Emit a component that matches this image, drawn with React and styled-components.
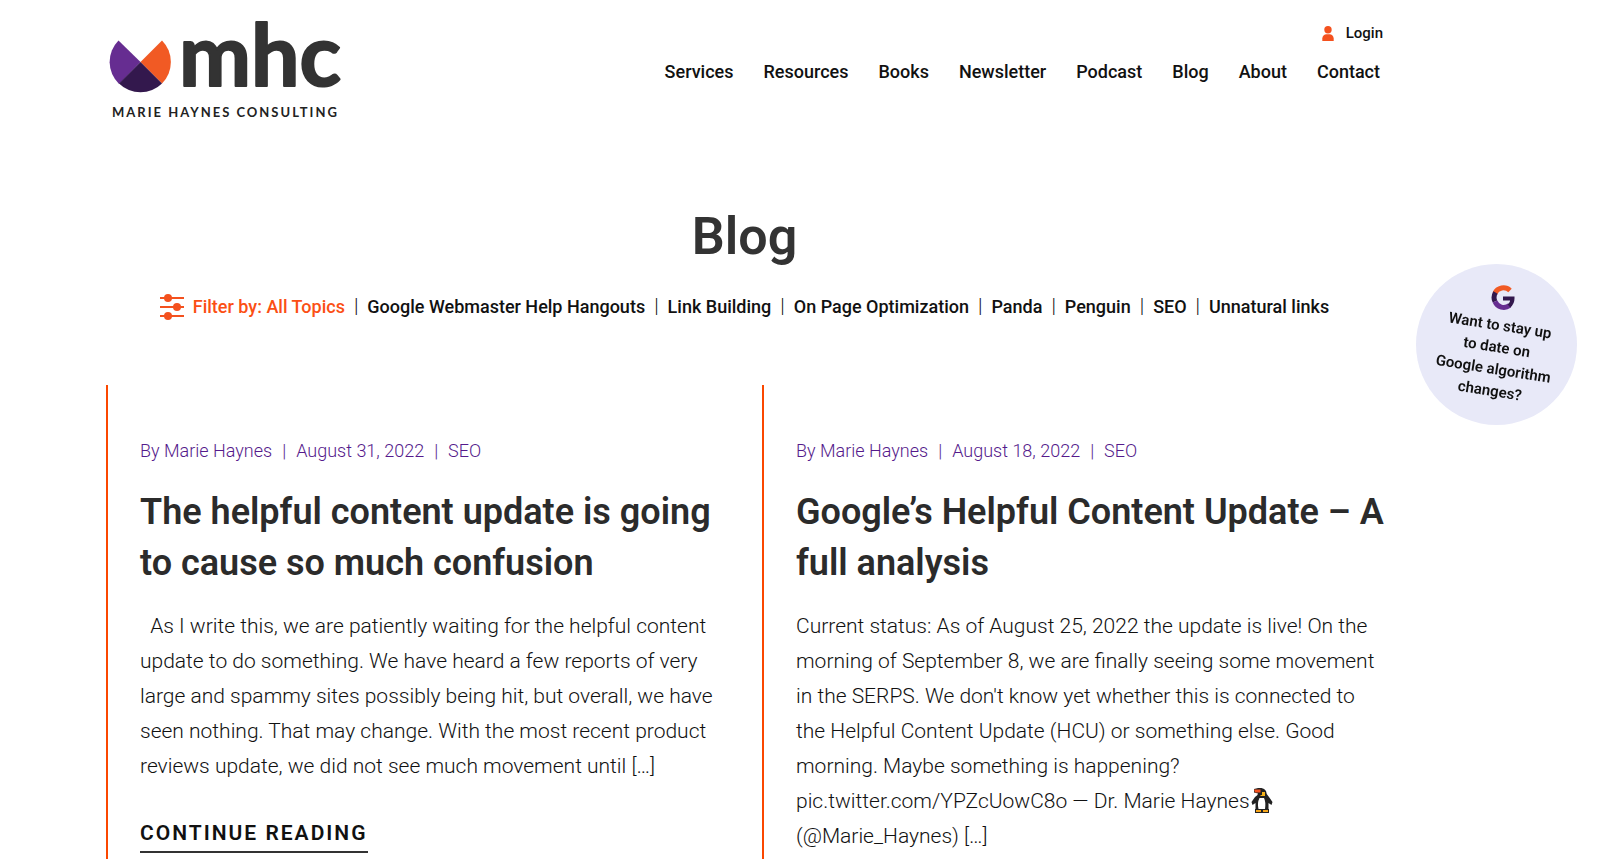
import React from 'react';
import styled, { createGlobalStyle } from 'styled-components';

const GlobalStyle = createGlobalStyle`
    * {
        box-sizing: border-box;
    }
    html {
        scrollbar-width: none;
    }
    body {
        margin: 0;
        background-color: #fff;
        color: #111;
        font-family: Roboto, "Liberation Sans", sans-serif;
    }
    a {
        color: inherit;
        text-decoration: none;
    }
    ul {
        list-style: none;
        margin: 0;
        padding: 0;
    }
`;
const Page = styled.div`
    padding: 0 217px 0 106px;
`;
const Header = styled.header`
    display: flex;
    justify-content: space-between;
    align-items: flex-start;
    padding-top: 12px;
`;
const LogoLink = styled.a`
    display: block;
    line-height: 0;
`;
const LogoSvg = styled.svg`
    width: 240px;
    height: 112px;
    overflow: visible;
`;
const HeaderRight = styled.div`
    display: flex;
    flex-direction: column;
    align-items: flex-end;
    gap: 17px;
    padding-top: 10px;
`;
const Login = styled.a`
    display: flex;
    align-items: center;
    gap: 12px;
    font-size: 15px;
    font-weight: 500;
    line-height: 22px;
`;
const Menu = styled.ul`
    display: flex;
    gap: 30px;
    padding-right: 3px;
    font-size: 18px;
    font-weight: 500;
    line-height: 22px;
`;
const Heading = styled.h1`
    margin: 83px 0 0;
    color: #333;
    font-size: 52px;
    font-weight: 600;
    line-height: 60px;
    text-align: center;
`;
const FilterBar = styled.nav`
    display: flex;
    justify-content: center;
    align-items: center;
    gap: 9px;
    margin-top: 27px;
    font-size: 18px;
    font-weight: 500;
    line-height: 26px;
    white-space: nowrap;
`;
const FilterList = styled.ul`
    display: flex;
`;
const FilterItem = styled.li`
    color: ${props => props.$active ? '#fb4f14' : '#111'};
    &:not(:first-child)::before {
        content: '|';
        margin: 0 9px;
        color: #111;
        font-size: 20px;
        font-weight: 300;
        line-height: 20px;
    }
`;
const Posts = styled.main`
    display: grid;
    grid-template-columns: 1fr 1fr;
    gap: 35px;
    margin-top: 65px;
`;
const Post = styled.article`
    padding: 54px 0 54px 32px;
    border-left: 2px solid #fb4700;
`;
const Meta = styled.div`
    display: flex;
    color: #551a8b;
    font-size: 18px;
    font-weight: 300;
    line-height: 24px;
    & > * + *::before {
        content: '|';
        margin: 0 10px;
    }
`;
const PostTitle = styled.h2`
    margin: 24px -4px 0 0;
    color: #2b2b2b;
    font-size: 36px;
    font-weight: 600;
    line-height: 51px;
`;
const Excerpt = styled.p`
    margin: 20px 0 0;
    font-size: 21px;
    font-weight: 300;
    line-height: 35px;
`;
const PenguinIcon = styled.svg`
    width: 22px;
    height: 25px;
    margin-left: 1px;
    vertical-align: -5px;
`;
const ReadMore = styled.a`
    display: inline-block;
    margin-top: 31px;
    border-bottom: 2px solid #333;
    font-size: 21px;
    font-weight: 600;
    line-height: 36px;
    letter-spacing: 2px;
    text-transform: uppercase;
`;
const Badge = styled.a`
    position: fixed;
    top: 264px;
    right: 23px;
    width: 161px;
    height: 161px;
    padding: 21px 3px 0 0;
    border-radius: 50%;
    background-color: #e8e9f8;
    display: flex;
    flex-direction: column;
    align-items: center;
    gap: 3px;
`;
const BadgeIcon = styled.svg`
    width: 26px;
    height: 26px;
    margin-left: 15px;
`;
const BadgeText = styled.span`
    width: 118px;
    font-size: 15px;
    font-weight: 600;
    line-height: 22px;
    text-align: center;
    transform: rotate(9deg);
`;

const menu = ['Services', 'Resources', 'Books', 'Newsletter', 'Podcast', 'Blog', 'About', 'Contact'];
const topics = [
    'Filter by: All Topics',
    'Google Webmaster Help Hangouts',
    'Link Building',
    'On Page Optimization',
    'Panda',
    'Penguin',
    'SEO',
    'Unnatural links',
];

const Logo = () => (
    <LogoSvg viewBox="0 0 240 112" role="img" aria-label="Marie Haynes Consulting">
        <path d="M34.5 50 L12.5 28.5 A30.5 30.5 0 0 0 13 72 Z" fill="#662d91" />
        <path d="M34.5 50 L56 28.5 A30.5 30.5 0 0 1 56 71.5 Z" fill="#f15a24" />
        <path d="M34.5 50 L13 71.5 A30.5 30.5 0 0 0 56 71.5 Z" fill="#33184d" />
        <text
            x="73"
            y="74"
            fill="#333"
            stroke="#333"
            strokeWidth="2"
            strokeLinejoin="round"
            fontFamily="Lato, sans-serif"
            fontWeight="700"
            fontSize="86"
        >
            mhc
        </text>
        <text x="6" y="105" fill="#222" fontFamily="Lato, sans-serif" fontWeight="700" fontSize="13" letterSpacing="2">
            MARIE HAYNES CONSULTING
        </text>
    </LogoSvg>
);

const UserIcon = () => (
    <svg width="12" height="15" viewBox="0 0 12 15" fill="#f4511e" aria-hidden="true">
        <circle cx="6" cy="3.8" r="3.7" />
        <path d="M0.3 15 V12.5 Q0.5 9 4 8.2 H8 Q11.5 9 11.7 12.5 V15 Z" />
    </svg>
);

const FilterIcon = () => (
    <svg width="24" height="26" viewBox="0 0 24 26" fill="#f4511e" aria-hidden="true">
        <path d="M0 3h24v2H0zM0 12h24v2H0zM0 21h24v2H0z" />
        <circle cx="8" cy="4" r="4" />
        <circle cx="17" cy="13" r="4" />
        <circle cx="8" cy="22" r="4" />
    </svg>
);

const Penguin = () => (
    <PenguinIcon viewBox="0 0 22 25" role="img" aria-label="penguin">
        <path d="M3 1 Q12 -2 15 3 Q15 6 18 9 L21.5 14 L20.5 17 L17.5 15 V22 H4.5 V15 L1.5 17 L0.5 14 L4 9 Q7 7 7 5.5 L3 4.5 Z" fill="#222" />
        <path d="M8.5 10 H13 Q15 14 14 21 H7.5 Q6 15 8.5 10 Z" fill="#fff" />
        <path d="M3 1.5 H9.5 V4.5 H4 Z" fill="#f4511e" />
        <path d="M11 4 H14 V8 H9.5 V7 H11 Z" fill="#f5b21a" />
        <path d="M4 21 H18 V25 H4 Z" fill="#222" />
        <path d="M5 22 H10 V24 H5 Z M12 22 H17 V24 H12 Z" fill="#f5a51a" />
    </PenguinIcon>
);

const GoogleMark = () => (
    <BadgeIcon viewBox="0 0 26 26" fill="none" strokeWidth="5" aria-hidden="true">
        <path d="M20 5.5 A9.5 9.5 0 0 0 4.8 8.5" stroke="#f15a24" />
        <path d="M5.5 7.5 A9.5 9.5 0 0 0 5 16.5" stroke="#33184d" />
        <path d="M5 16.5 A9.5 9.5 0 0 0 19.5 20.5" stroke="#662d91" />
        <path d="M13 13.5 H22.5 Q22.5 18 19 21" stroke="#33184d" strokeWidth="4" />
    </BadgeIcon>
);

const posts = [
    {
        date: 'August 31, 2022',
        title: 'The helpful content update is going to cause so much confusion',
        excerpt: '\u00a0 As I write this, we are patiently waiting for the helpful content update to do something. We have heard a few reports of very large and spammy sites possibly being hit, but overall, we have seen nothing. That may change. With the most recent product reviews update, we did not see much movement until […]',
    },
    {
        date: 'August 18, 2022',
        title: 'Google’s Helpful Content Update – A full analysis',
        excerpt: (
            <>
                Current status: As of August 25, 2022 the update is live! On the morning of September 8, we are
                finally seeing some movement in the SERPS. We don't know yet whether this is connected to the
                Helpful Content Update (HCU) or something else. Good morning. Maybe something is happening?
                pic.twitter.com/YPZcUowC8o — Dr. Marie Haynes<Penguin /> (@Marie_Haynes) […]
            </>
        ),
    },
];

const App = () => {
    return (
        <>
            <GlobalStyle />
            <Page>
                <Header>
                    <LogoLink href="#home"><Logo /></LogoLink>
                    <HeaderRight>
                        <Login href="#login"><UserIcon />Login</Login>
                        <nav>
                            <Menu>
                                {menu.map(name => (
                                    <li key={name}><a href={`#${name}`}>{name}</a></li>
                                ))}
                            </Menu>
                        </nav>
                    </HeaderRight>
                </Header>
                <Heading>Blog</Heading>
                <FilterBar>
                    <FilterIcon />
                    <FilterList>
                        {topics.map((topic, index) => (
                            <FilterItem key={topic} $active={index === 0}>
                                <a href="#topic">{topic}</a>
                            </FilterItem>
                        ))}
                    </FilterList>
                </FilterBar>
                <Posts>
                    {posts.map(({ date, title, excerpt }) => (
                        <Post key={title}>
                            <Meta>
                                <a href="#author">By Marie Haynes</a>
                                <span>{date}</span>
                                <a href="#seo">SEO</a>
                            </Meta>
                            <PostTitle><a href="#post">{title}</a></PostTitle>
                            <Excerpt>{excerpt}</Excerpt>
                            <ReadMore href="#post">Continue reading</ReadMore>
                        </Post>
                    ))}
                </Posts>
            </Page>
            <Badge href="#newsletter">
                <GoogleMark />
                <BadgeText>Want to stay up to date on Google algorithm changes?</BadgeText>
            </Badge>
        </>
    );
};

export default App;
